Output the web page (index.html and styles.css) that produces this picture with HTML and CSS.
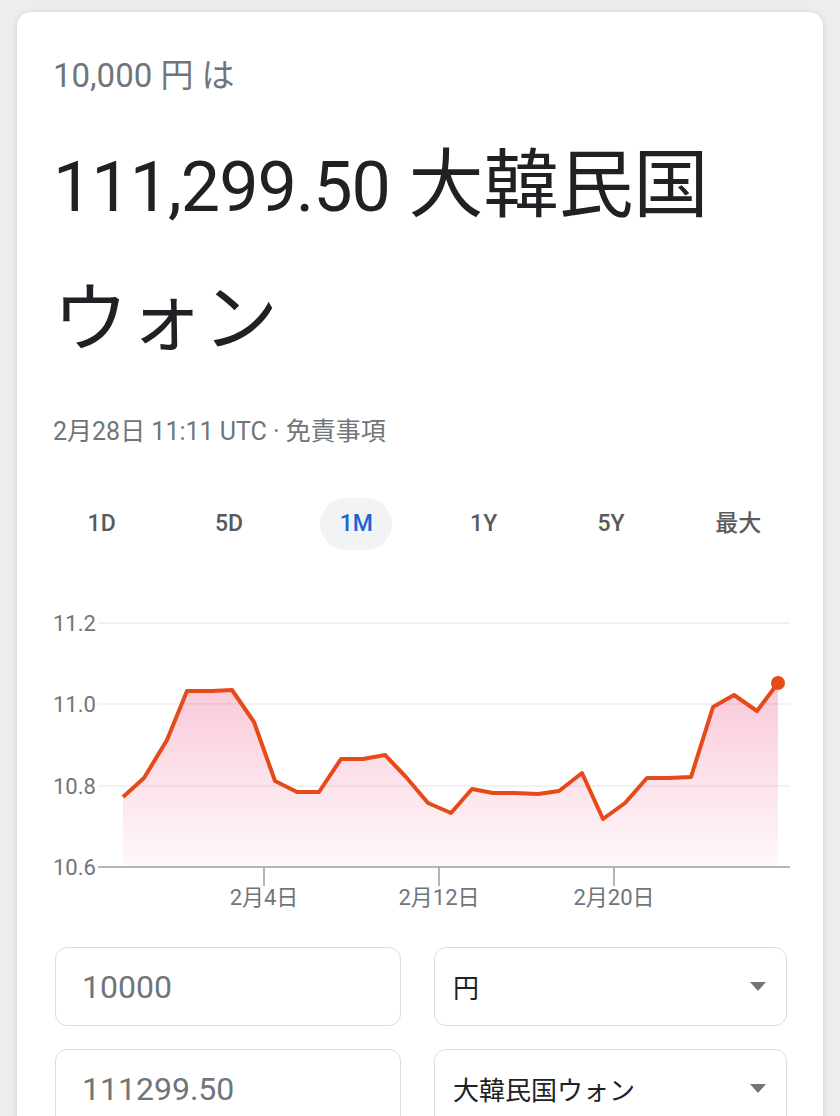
FILE: index.html
```html
<!DOCTYPE html>
<html lang="ja">
<head>
    <meta charset="UTF-8">
    <meta name="viewport" content="width=device-width, initial-scale=1.0">
    <title>円 から 大韓民国ウォン</title>
    <link rel="stylesheet" href="styles.css">
</head>
<body>
    <div class="card">
        <p class="lead">10,000 円 は</p>
        <h1 class="result"><span class="num">111,299.50</span> <span>大韓民国</span><span>ウォン</span></h1>
        <p class="meta">2月28日 11:11 UTC · 免責事項</p>

        <div class="ranges">
            <span class="range">1D</span>
            <span class="range">5D</span>
            <span class="range active">1M</span>
            <span class="range">1Y</span>
            <span class="range">5Y</span>
            <span class="range">最大</span>
        </div>

        <svg class="chart" viewBox="53 600 740 315" width="740" height="315">
            <defs>
                <linearGradient id="fill" x1="0" y1="683" x2="0" y2="867" gradientUnits="userSpaceOnUse">
                    <stop offset="0" stop-color="#e91e63" stop-opacity="0.24"/>
                    <stop offset="1" stop-color="#e91e63" stop-opacity="0.03"/>
                </linearGradient>
            </defs>
            <!-- grid -->
            <line class="grid" x1="98" y1="623" x2="790" y2="623"/>
            <line class="grid" x1="98" y1="704" x2="790" y2="704"/>
            <line class="grid" x1="98" y1="786" x2="790" y2="786"/>
            <text class="axis" x="53" y="631">11.2</text>
            <text class="axis" x="53" y="712">11.0</text>
            <text class="axis" x="53" y="794">10.8</text>
            <text class="axis" x="53" y="875">10.6</text>

            <path class="area" d="M123,867 L123,797 144,778 167,740 187,691 212,691 232,690 254,722 275,781 297,792 319,792 341,759 363,759 385,755 406,777 428,803 451,813 472,789 493,793 515,793 538,794 559,791 582,773 603,819 625,803 647,778 668,778 691,777 713,707 734,695 757,711 778,683 L778,867 Z"/>
            <polyline class="line" points="123,797 144,778 167,740 187,691 212,691 232,690 254,722 275,781 297,792 319,792 341,759 363,759 385,755 406,777 428,803 451,813 472,789 493,793 515,793 538,794 559,791 582,773 603,819 625,803 647,778 668,778 691,777 713,707 734,695 757,711 778,683"/>
            <circle class="dot" cx="778" cy="683" r="7"/>

            <!-- x axis -->
            <line class="base" x1="98" y1="867" x2="790" y2="867"/>
            <line class="tick" x1="264" y1="867" x2="264" y2="886"/>
            <line class="tick" x1="439" y1="867" x2="439" y2="886"/>
            <line class="tick" x1="614" y1="867" x2="614" y2="886"/>
            <text class="axis mid" x="264" y="905">2月4日</text>
            <text class="axis mid" x="439" y="905">2月12日</text>
            <text class="axis mid" x="614" y="905">2月20日</text>
        </svg>

        <div class="converter">
            <input class="field amount" type="text" value="10000">
            <div class="field currency">
                <span>円</span>
                <svg class="caret" width="16" height="9" viewBox="0 0 16 9"><path d="M0 0h16L8 9z"/></svg>
            </div>
            <input class="field amount" type="text" value="111299.50">
            <div class="field currency">
                <span>大韓民国ウォン</span>
                <svg class="caret" width="16" height="9" viewBox="0 0 16 9"><path d="M0 0h16L8 9z"/></svg>
            </div>
        </div>
    </div>
</body>
</html>
```

FILE: styles.css
```css
body {
    margin: 0;
    background-color: #ededed;
    font-family: Roboto, "Noto Sans CJK JP", sans-serif;
    color: #202124;
}

.card {
    margin: 12px 17px 0;
    padding: 44px 36px 40px;
    background-color: #fff;
    border-radius: 14px;
    box-shadow: 0 1px 6px rgba(0, 0, 0, 0.14);
    min-height: 1200px;
}

.lead {
    margin: 0;
    font-size: 33px;
    line-height: 40px;
    color: #70757a;
}

.result {
    margin: 22px 0 0;
    padding-right: 30px;
    font-size: 75px;
    font-weight: 400;
    line-height: 134px;
    color: #202124;
}

.result .num {
    font-size: 70px;
    line-height: 80px;
    letter-spacing: -1px;
}

.meta {
    margin: 31px 0 0;
    font-size: 25px;
    line-height: 30px;
    color: #70757a;
}

.ranges {
    display: grid;
    grid-template-columns: repeat(6, 1fr);
    margin: 51px -15px 0;
}

.range {
    justify-self: center;
    min-width: 72px;
    height: 52px;
    line-height: 52px;
    border-radius: 26px;
    text-align: center;
    font-size: 23px;
    font-weight: 500;
    color: #5a5a5a;
}

.range.active {
    background-color: #f1f3f4;
    color: #1a66d2;
}

.chart {
    display: block;
    margin-top: 50px;
}

.grid {
    stroke: #eeeeee;
    stroke-width: 1.5;
}

.base,
.tick {
    stroke: #9e9e9e;
    stroke-width: 1.5;
}

.axis {
    font-family: Roboto, "Noto Sans CJK JP", sans-serif;
    font-size: 22px;
    fill: #70757a;
}

.axis.mid {
    text-anchor: middle;
}

.area {
    fill: url(#fill);
}

.line {
    fill: none;
    stroke: #e64a19;
    stroke-width: 4;
    stroke-linejoin: round;
}

.dot {
    fill: #e64a19;
}

.converter {
    display: grid;
    grid-template-columns: 346px 353px;
    column-gap: 33px;
    row-gap: 23px;
    margin: 32px 0 0 2px;
}

.field {
    box-sizing: border-box;
    height: 79px;
    border: 1.5px solid #dadce0;
    border-radius: 12px;
    background: #fff;
}

.amount {
    width: 100%;
    padding: 0 26px;
    font-family: Roboto, "Noto Sans CJK JP", sans-serif;
    font-size: 32px;
    color: #70757a;
    outline: none;
}

.currency {
    display: flex;
    align-items: center;
    justify-content: space-between;
    padding: 0 20px 0 18px;
    font-size: 26px;
    color: #202124;
}

.caret {
    fill: #757575;
}
```
